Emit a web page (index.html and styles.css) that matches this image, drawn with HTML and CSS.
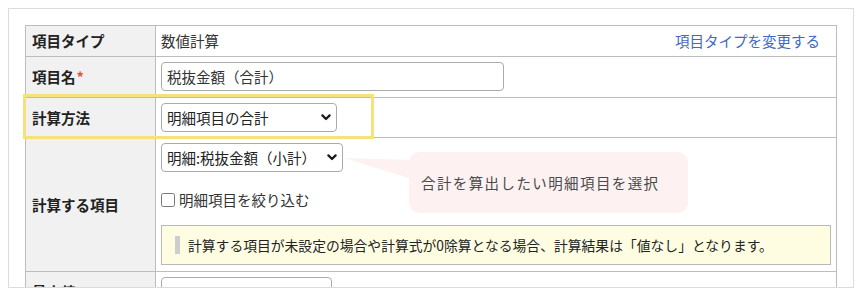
FILE: index.html
```html
<!DOCTYPE html>
<html>
<head>
    <meta charset="utf-8">
    <link rel="stylesheet" href="styles.css">
</head>
<body>
    <div class="panel">
        <table class="form-table">
            <colgroup>
                <col class="col-label">
                <col>
            </colgroup>
            <tr class="row-type">
                <th>項目タイプ</th>
                <td>
                    <div class="type-cell">
                        <span>数値計算</span>
                        <a href="#" class="change-link">項目タイプを変更する</a>
                    </div>
                </td>
            </tr>
            <tr class="row-name">
                <th>項目名<span class="req">*</span></th>
                <td><input type="text" class="text-input name-input" value="税抜金額（合計）"></td>
            </tr>
            <tr class="row-method">
                <th>計算方法</th>
                <td>
                    <span class="select-wrap method-wrap">
                        <select class="select"><option>明細項目の合計</option></select>
                        <svg class="chev" width="10" height="7" viewBox="0 0 10 7"><path d="M1.4 1.4 L5 5 L8.6 1.4" fill="none" stroke="#1a1a1a" stroke-width="2.2" stroke-linecap="round" stroke-linejoin="round"/></svg>
                    </span>
                </td>
            </tr>
            <tr class="row-target">
                <th>計算する項目</th>
                <td>
                    <span class="select-wrap target-wrap">
                        <select class="select"><option>明細:税抜金額（小計）</option></select>
                        <svg class="chev" width="10" height="7" viewBox="0 0 10 7"><path d="M1.4 1.4 L5 5 L8.6 1.4" fill="none" stroke="#1a1a1a" stroke-width="2.2" stroke-linecap="round" stroke-linejoin="round"/></svg>
                    </span>
                    <label class="filter-check"><input type="checkbox">明細項目を絞り込む</label>
                    <div class="note">
                        <p>計算する項目が未設定の場合や計算式が0除算となる場合、計算結果は「値なし」となります。</p>
                    </div>
                </td>
            </tr>
            <tr class="row-min">
                <th>最小値</th>
                <td><input type="text" class="text-input min-input"></td>
            </tr>
        </table>

        <div class="highlight"></div>
        <svg class="tip-tail" width="72" height="28" viewBox="0 0 72 28"><polygon points="4,3 72,5 72,24" fill="#fdf1f1"/></svg>
        <div class="tip">合計を算出したい明細項目を選択</div>
    </div>
</body>
</html>
```

FILE: styles.css
```css
body {
    margin: 8px;
    background: #ffffff;
    font-family: "Noto Sans CJK JP", "Noto Sans", sans-serif;
    font-size: 14.5px;
    color: #333;
}
.panel {
    position: relative;
    box-sizing: border-box;
    height: 280px;
    padding: 16px;
    border: 1px solid #dcdcdc;
    overflow: hidden;
}
.form-table {
    width: 100%;
    border-collapse: collapse;
    table-layout: fixed;
}
.col-label {
    width: 130px;
}
.form-table th,
.form-table td {
    border: 1px solid #bdbdbd;
    padding: 5px;
    line-height: 20px;
    vertical-align: middle;
}
.form-table th {
    background: #f1f1f1;
    text-align: left;
    font-weight: bold;
    padding-left: 6px;
    color: #222;
}
.req {
    color: #e2573b;
    margin-left: 1px;
}
.type-cell {
    display: flex;
    justify-content: space-between;
}
.change-link {
    color: #3e69c2;
    text-decoration: none;
    margin-right: 11px;
}
.row-name td {
    padding-bottom: 6px;
}
.text-input {
    display: block;
    box-sizing: border-box;
    height: 29px;
    padding: 0 5px;
    border: 1px solid #ababab;
    border-radius: 4px;
    font-family: "Noto Sans CJK JP", "Noto Sans", sans-serif;
    font-size: 14.5px;
    color: #333;
}
.name-input {
    width: 343px;
}
.min-input {
    width: 171px;
}
.select-wrap {
    position: relative;
    display: block;
}
.method-wrap {
    width: 176px;
}
.target-wrap {
    width: 182px;
}
.select {
    appearance: none;
    -webkit-appearance: none;
    display: block;
    box-sizing: border-box;
    width: 100%;
    height: 29px;
    padding: 0 5px;
    border: 1px solid #ababab;
    border-radius: 4px;
    background: #fff;
    font-family: "Noto Sans CJK JP", "Noto Sans", sans-serif;
    font-size: 14.5px;
    color: #222;
}
.chev {
    position: absolute;
    right: 6px;
    top: 11px;
    pointer-events: none;
}
.row-target td {
    padding-bottom: 6px;
}
.filter-check {
    display: flex;
    align-items: center;
    height: 22px;
    margin-top: 17px;
}
.filter-check input {
    width: 14px;
    height: 14px;
    margin: 0 4px 0 0;
}
.note {
    margin-top: 14px;
    padding: 10px 13px;
    background: #fefde2;
    border: 1px solid #b8b8b8;
}
.note p {
    margin: 0;
    padding-left: 8px;
    border-left: 5px solid #cdcdcd;
    font-size: 13.8px;
    line-height: 18px;
    color: #222;
}
.highlight {
    position: absolute;
    left: 14px;
    top: 85px;
    width: 351px;
    height: 45px;
    box-sizing: border-box;
    border: 3px solid #f6e27c;
}
.tip-tail {
    position: absolute;
    left: 331px;
    top: 146px;
}
.tip {
    position: absolute;
    left: 400px;
    top: 143px;
    width: 279px;
    height: 61px;
    box-sizing: border-box;
    padding-left: 12px;
    display: flex;
    align-items: center;
    border-radius: 11px;
    background: #fdf1f1;
    color: #4a4a4a;
    letter-spacing: 1.4px;
}
```
